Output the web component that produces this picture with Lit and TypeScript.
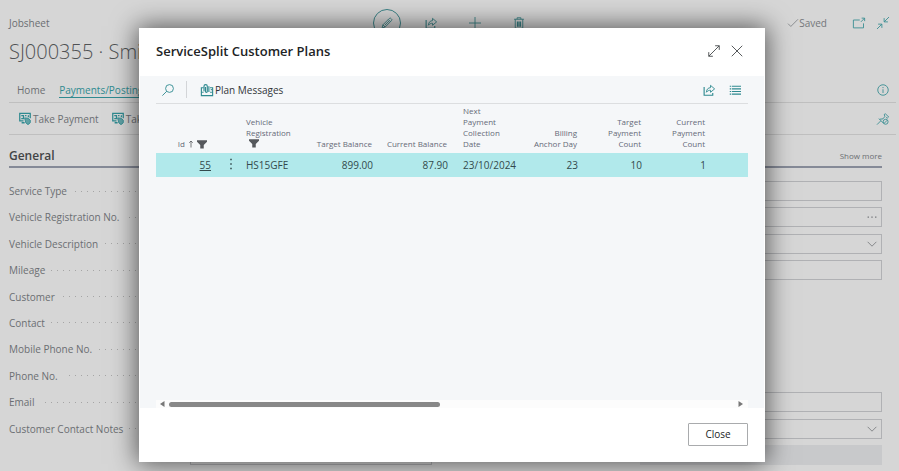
import { LitElement, html, css, svg, nothing, TemplateResult } from "lit";
import { customElement } from "lit/decorators.js";

type IconName =
  | "edit" | "share" | "plus" | "trash" | "check" | "popout" | "collapse" | "expand" | "close"
  | "info" | "pin" | "search" | "payment" | "messages" | "list" | "funnel" | "chevron" | "arrowUp"
  | "more" | "dots" | "left" | "right";

const shapes: Record<IconName, TemplateResult> = {
  edit: svg`<path d="M1.500 14.500 2.500 10.500 11 2a1.700 1.700 0 0 1 2.600.300 1.700 1.700 0 0 1 .2 2.700L5.500 13.400ZM9.800 3.400l2.800 2.800M2.500 10.500l3 3M5 11l5.800-5.800"/>`,
  share: svg`<path d="M1.500 4v11h11.500v-3M1.500 15h11" stroke-width="1.500"/><path d="M4.500 11c.3-4.200 2.500-6 5.500-6.100V1.800L15.500 6.500 10 11V8.300C7.800 8.300 6 9.200 4.500 11Z"/>`,
  plus: svg`<path d="M8 0v16M0 8h16"/>`,
  trash: svg`<path d="M1.500 3h13M5.500 3V1h5v2M3 3v12h10V3"/><path d="M6 6v7M8 6v7M10 6v7" stroke-width="1.600"/>`,
  check: svg`<path d="m0 9 4.500 4.500L16 2"/>`,
  popout: svg`<path d="M9 4H.500v10.500h13.500V8.500M10.500 6.500l5-5M11.500 1.500h4v4"/>`,
  collapse: svg`<path d="M16 0 9.500 6.500M9.500 1.500v5h5M0 16l6.500-6.500M1.500 9.500h5v5"/>`,
  expand: svg`<path d="M1 15 15 1M9.500 1H15v5.500M1 9.500V15h5.500"/>`,
  close: svg`<path d="m1 1 14 14M15 1 1 15"/>`,
  info: svg`<circle cx="8" cy="8" r="7"/><path d="M8 7v5M8 4v1.500"/>`,
  pin: svg`<path d="M0 15.500l5-5M2.500 7.500l6 6M3.500 8.300l4.500-.500 2.700-3.500L9.500 2.500 11 .800l4.500 4.500-1.700 1.500L12 6"/><circle cx="11.500" cy="11.700" r="3.300"/><path d="M9.300 14l4.400-4.400"/>`,
  search: svg`<circle cx="10" cy="6" r="5.200"/><path d="M6.300 9.700.500 15.500"/>`,
  payment: svg`<path d="M6 10.500H1v-10h14V7" stroke-width="1.700"/><path d="M3 3.500h3v4H3M12.500 3v2.500M3.500 13h4M8 3.500h2" stroke-width="1.700"/><path d="M7.500 6.500 12 7l3 2.500V13l-3 2.500L9 13Z" fill="currentColor" fill-opacity=".7"/>`,
  messages: svg`<path d="M3.500 5H.500v10.500h15V5H12" stroke-width="1.500"/><path d="M.500 11h3M12 11h3.500"/><path d="M4 9.500V3a2.200 2.200 0 0 1 4.400 0v7a1.200 1.200 0 0 1-2.400 0V4M10.500 3v7.500" stroke-width="1.500"/><path d="M13 7.500h1.500" stroke-width="1.600"/>`,
  list: svg`<path d="M1 3h2M4 3h12M1 6.500h2M4 6.500h12M1 10h2M4 10h12M1 13.500h2M4 13.500h12" stroke-width="1.600"/>`,
  funnel: svg`<path d="M0 2h16v2.500L10.800 9.500v5.500H5.200V9.500L0 4.500Z" fill="currentColor" stroke="none"/>`,
  chevron: svg`<path d="m1 4.500 7 7 7-7"/>`,
  arrowUp: svg`<path d="M8 15V2M4.500 5.500 8 2l3.500 3.500" stroke-width="1.600"/>`,
  more: svg`<path d="M7 1h2v2H7zM7 7h2v2H7zM7 13h2v2H7z" fill="currentColor" stroke="none"/>`,
  dots: svg`<path d="M1 7h2v2H1zM7 7h2v2H7zM13 7h2v2h-2z" fill="currentColor" stroke="none"/>`,
  left: svg`<path d="M13 2v12L4 8Z" fill="currentColor" stroke="none"/>`,
  right: svg`<path d="M3 2v12l9-6Z" fill="currentColor" stroke="none"/>`,
};

const icon = (name: IconName, size = "s12") => html`
  <svg class="icon ${size}" viewBox="0 0 16 16" fill="none" stroke="currentColor" stroke-width="1.2" aria-hidden="true">${shapes[name]}</svg>`;

const leftFields = [
  "Service Type", "Vehicle Registration No.", "Vehicle Description", "Mileage", "Customer", "Contact",
  "Mobile Phone No.", "Phone No.", "Email", "Customer Contact Notes", "",
];

type Box = { kind: "text" | "lookup" | "select" | "disabled" | "none"; name: string };
const rightFields: Box[] = [
  { kind: "text", name: "Status" },
  { kind: "lookup", name: "Location" },
  { kind: "select", name: "Advisor" },
  { kind: "text", name: "Reference" },
  { kind: "none", name: "" },
  { kind: "none", name: "" },
  { kind: "none", name: "" },
  { kind: "none", name: "" },
  { kind: "text", name: "Order No." },
  { kind: "select", name: "Priority" },
  { kind: "disabled", name: "Total" },
];

@customElement("app-root")
export class AppRoot extends LitElement {
  static styles = css`
    :host {
      display: block;
      position: relative;
      min-height: 100vh;
      overflow: hidden;
      font-family: "Open Sans", "Noto Sans", sans-serif;
      font-size: 10px;
      line-height: 14px;
      color: #6b6e72;
    }
    * { box-sizing: border-box; }
    button, input, select { font: inherit; color: inherit; }
    button { display: inline-flex; align-items: center; padding: 0; border: 0; background: none; }
    h1, h2 { margin: 0; }
    .icon { display: block; flex: none; overflow: visible; }
    .s8 { width: 8px; height: 8px; }
    .s10 { width: 10px; height: 10px; }
    .s12 { width: 12px; height: 12px; }
    .page {
      display: flex;
      flex-direction: column;
      min-height: 100vh;
      padding: 8px 3px 6px 9px;
      background: #d6d6d6;
    }
    .top { display: grid; grid-template-columns: 1fr auto 1fr; align-items: center; height: 30px; padding-right: 7px; }
    .actions { display: flex; align-items: center; gap: 32px; color: #3b8387; }
    .round {
      justify-content: center;
      width: 28px;
      height: 28px;
      margin-right: -8px;
      border: 1px solid #3b8387;
      border-radius: 50%;
    }
    .status { display: flex; justify-content: flex-end; align-items: center; gap: 12px; color: #3b8e93; }
    .saved { display: flex; align-items: center; gap: 1px; margin-right: 14px; color: #74777b; }
    .title { height: 40px; font-size: 20px; line-height: 28px; font-weight: 300; color: #505254; }
    .tabs { display: flex; align-items: center; gap: 14px; height: 25px; padding: 0 7px 0 8px; border-bottom: 1px solid #bfbfbf; }
    .tab { color: inherit; text-decoration: none; }
    .tab.active { color: #2f8a90; border-bottom: 1px solid #2f8a90; }
    .push { margin-left: auto; color: #3b8e93; }
    .tools { display: flex; align-items: center; gap: 13px; height: 32px; padding: 0 7px 0 10px; border-bottom: 1px solid #bfbfbf; }
    .tool { gap: 2px; white-space: nowrap; }
    .tool .icon, .teal { color: #2f8a90; }
    .section {
      display: flex;
      justify-content: space-between;
      align-items: center;
      height: 33px;
      margin: 0 14px 13px 0;
      padding-top: 10px;
      border-bottom: 2px solid #858a97;
    }
    .section h2 { font-size: 12px; font-weight: 600; color: #424446; }
    .small { font-size: 8px; color: inherit; text-decoration: none; }
    .fields { display: grid; grid-template-columns: 1fr 1fr; gap: 27px; flex: 1; margin-right: 14px; }
    .column { display: flex; flex-direction: column; justify-content: space-between; }
    .field { display: grid; grid-template-columns: 181px 1fr; height: 20px; align-items: center; }
    .field label { display: flex; align-items: center; gap: 6px; white-space: nowrap; }
    .field label.filled::after {
      content: "";
      flex: 1;
      height: 1px;
      background: repeating-linear-gradient(to left, #a5a5a5 0 1px, transparent 1px 6px);
    }
    .box {
      grid-column: 2;
      display: flex;
      align-items: center;
      height: 20px;
      padding-right: 4px;
      border: 1px solid #b0b1b4;
    }
    .box.disabled { border-color: #c8c9cb; background: #c8c9cb; }
    .box input, .box select { flex: 1; min-width: 0; height: 18px; padding: 0 4px; border: 0; appearance: none; background: none; }
    .overlay { position: absolute; inset: 0; display: flex; padding: 28px 134px 9px 139px; }
    .dialog {
      flex: 1;
      min-width: 0;
      display: flex;
      flex-direction: column;
      background: #fff;
      color: #323538;
      box-shadow: 0 0 24px 2px rgba(0, 0, 0, 0.6);
    }
    .heading { display: flex; align-items: center; height: 48px; padding: 0 22px 2px 17px; }
    .heading h2 { flex: 1; font-size: 13px; font-weight: 600; color: #212325; }
    .heading .buttons { display: flex; align-items: center; gap: 11px; color: #45484b; }
    .content { flex: 1; display: flex; flex-direction: column; margin: 0 1px; padding: 0 16px; background: #f5f7f9; }
    .bar { display: flex; align-items: center; height: 28px; padding: 0 7px 0 6px; border-bottom: 1px solid #dcdee0; }
    .bar .tool { padding-left: 14px; border-left: 1px solid #d3d5d8; margin-left: 12px; height: 17px; }
    .bar .right { display: flex; gap: 14px; margin-left: auto; }
    table { width: 100%; border-collapse: collapse; table-layout: fixed; }
    .c-id { width: 60px; }
    .c-more { width: 25px; }
    .c-text { width: 62px; }
    .c-money { width: 75px; }
    .c-date { width: 66px; }
    .c-count { width: 64px; }
    th {
      height: 49px;
      padding: 0 6px 4px 5px;
      vertical-align: bottom;
      text-align: left;
      font-size: 8px;
      line-height: 11px;
      font-weight: 400;
      color: #656a78;
    }
    td { height: 24px; padding: 0 5px; background: #b1e9eb; color: #33494c; }
    .num { text-align: right; }
    .date { padding-left: 10px; white-space: nowrap; }
    .options { padding: 0 0 0 9px; }
    .nowrap { white-space: nowrap; }
    .sort { display: flex; justify-content: flex-end; align-items: center; gap: 2px; padding-right: 3px; }
    .sort .icon, th > .icon { color: #55585c; }
    .filter { padding-left: 3px; height: 11px; color: #55585c; }
    td a { color: inherit; text-underline-offset: 1px; }
    .scroll { display: flex; align-items: center; gap: 3px; height: 8px; margin-top: auto; padding: 0 3px 0 2px; background: #fcfcfc; color: #777; }
    .track { flex: 1; }
    .thumb { width: 48%; height: 5px; border-radius: 3px; background: #888; }
    .footer { display: flex; justify-content: flex-end; align-items: center; height: 54px; padding: 0 17px 2px; }
    .close { justify-content: center; width: 60px; height: 23px; border: 1px solid #a9abad; border-radius: 1px; color: #212325; }
  `;

  private renderBox(box: Box) {
    if (box.kind === "none") return html`<div class="field"></div>`;
    return html`
      <div class="field">
        <div class="box ${box.kind}">
          ${box.kind === "select"
            ? html`<select aria-label=${box.name}><option></option></select>${icon("chevron", "s10")}`
            : html`<input aria-label=${box.name} ?disabled=${box.kind === "disabled"} />`}
          ${box.kind === "lookup" ? icon("dots", "s10") : nothing}
        </div>
      </div>`;
  }

  private renderPage() {
    return html`
      <main class="page" inert>
        <div class="top">
          <span>Jobsheet</span>
          <div class="actions">
            <button class="round" aria-label="Edit">${icon("edit")}</button>
            <button aria-label="Share">${icon("share")}</button>
            <button aria-label="New">${icon("plus")}</button>
            <button aria-label="Delete">${icon("trash")}</button>
          </div>
          <div class="status">
            <span class="saved">${icon("check", "s10")}Saved</span>
            <button aria-label="Open in new window">${icon("popout")}</button>
            <button aria-label="Collapse">${icon("collapse")}</button>
          </div>
        </div>
        <h1 class="title">SJ000355 · Smith</h1>
        <nav class="tabs">
          <a class="tab" href="#home">Home</a>
          <a class="tab active" href="#payments">Payments/Posting</a>
          <button class="push" aria-label="Information">${icon("info")}</button>
        </nav>
        <div class="tools">
          <button class="tool">${icon("payment")}Take Payment</button>
          <button class="tool">${icon("payment")}Take Deposit</button>
          <button class="push" aria-label="Pin">${icon("pin")}</button>
        </div>
        <div class="section">
          <h2>General</h2>
          <a class="small" href="#more">Show more</a>
        </div>
        <div class="fields">
          <div class="column">
            ${leftFields.map((name, i) => html`
              <div class="field">
                <label class=${name ? "filled" : ""} for="f${i}">${name}</label>
                <div class="box"><input id="f${i}" /></div>
              </div>`)}
          </div>
          <div class="column">${rightFields.map((box) => this.renderBox(box))}</div>
        </div>
      </main>`;
  }

  private renderTable() {
    return html`
      <table>
        <colgroup>
          <col class="c-id" /><col class="c-more" /><col class="c-text" /><col class="c-money" /><col class="c-money" />
          <col class="c-date" /><col class="c-count" /><col class="c-count" /><col class="c-count" /><col />
        </colgroup>
        <thead>
          <tr>
            <th><div class="sort">Id${icon("arrowUp", "s8")}${icon("funnel", "s10")}</div></th>
            <th></th>
            <th>Vehicle Registration<div class="filter">${icon("funnel", "s10")}</div></th>
            <th class="num nowrap">Target Balance</th>
            <th class="num nowrap">Current Balance</th>
            <th class="date">Next<br />Payment<br />Collection<br />Date</th>
            <th class="num">Billing<br />Anchor Day</th>
            <th class="num">Target<br />Payment<br />Count</th>
            <th class="num">Current<br />Payment<br />Count</th>
            <th></th>
          </tr>
        </thead>
        <tbody>
          <tr>
            <td class="num"><a href="#plan-55">55</a></td>
            <td class="options"><button aria-label="Row options">${icon("more", "s12")}</button></td>
            <td>HS15GFE</td>
            <td class="num">899.00</td>
            <td class="num">87.90</td>
            <td class="date">23/10/2024</td>
            <td class="num">23</td>
            <td class="num">10</td>
            <td class="num">1</td>
            <td></td>
          </tr>
        </tbody>
      </table>`;
  }

  render() {
    return html`
      ${this.renderPage()}
      <div class="overlay">
        <section class="dialog" role="dialog" aria-labelledby="dialog-title">
          <header class="heading">
            <h2 id="dialog-title">ServiceSplit Customer Plans</h2>
            <div class="buttons">
              <button aria-label="Expand">${icon("expand")}</button>
              <button aria-label="Close dialog">${icon("close")}</button>
            </div>
          </header>
          <div class="content">
            <div class="bar">
              <button class="teal" aria-label="Search">${icon("search")}</button>
              <button class="tool">${icon("messages")}Plan Messages</button>
              <div class="right">
                <button class="teal" aria-label="Share">${icon("share")}</button>
                <button class="teal" aria-label="List view">${icon("list")}</button>
              </div>
            </div>
            ${this.renderTable()}
            <div class="scroll">
              ${icon("left", "s8")}
              <div class="track"><div class="thumb"></div></div>
              ${icon("right", "s8")}
            </div>
          </div>
          <footer class="footer"><button class="close">Close</button></footer>
        </section>
      </div>`;
  }
}
